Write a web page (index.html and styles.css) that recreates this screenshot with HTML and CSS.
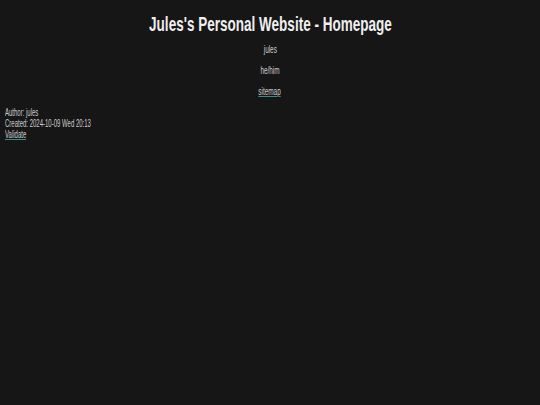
FILE: index.html
```html
<!DOCTYPE html>
<html>
<head>
<meta charset="utf-8">
<link rel="stylesheet" href="styles.css">
<title>Jules's Personal Website - Homepage</title>
</head>
<body>
<header class="header">
<h1 class="title"><span class="narrow-title">Jules's Personal Website - Homepage</span></h1>
<p class="subtitle"><span class="narrow-center">jules</span></p>
<p class="subtitle"><span class="narrow-center">he/him</span></p>
<p class="subtitle"><span class="narrow-center"><a class="link" href="#">sitemap</a></span></p>
</header>
<div class="postamble">
<p class="meta"><span class="narrow-left">Author: jules</span></p>
<p class="meta"><span class="narrow-left">Created: 2024-10-09 Wed 20:13</span></p>
<p class="meta"><span class="narrow-left"><a class="link" href="#">Validate</a></span></p>
</div>
</body>
</html>
```
FILE: styles.css
```css
html, body {
  background: #161616;
}
body {
  margin: 0;
  padding: 0 5px;
  color: #cdcdcd;
  font-family: "Liberation Sans", Arial, sans-serif;
  font-size: 10px;
  line-height: 11px;
}
.header {
  text-align: center;
}
.title {
  margin: 0 0 8px;
  padding-top: 12px;
  font-size: 21px;
  font-weight: bold;
  color: #efefef;
  line-height: 24px;
  white-space: nowrap;
}
.narrow-title {
  display: inline-block;
  transform: scaleX(0.644);
  transform-origin: 50% 50%;
}
.subtitle {
  margin: 10px 0;
}
.subtitle:first-of-type {
  margin-top: 0;
}
.narrow-center {
  display: inline-block;
  transform: scaleX(0.64);
  transform-origin: 50% 50%;
}
.postamble {
  margin-top: 9px;
}
.meta {
  margin: 0;
}
.narrow-left {
  display: inline-block;
  white-space: nowrap;
  transform: scaleX(0.6);
  transform-origin: 0 50%;
}
.link {
  color: #cdcdcd;
  text-decoration: underline;
  text-decoration-color: #3a8c8c;
}
```
